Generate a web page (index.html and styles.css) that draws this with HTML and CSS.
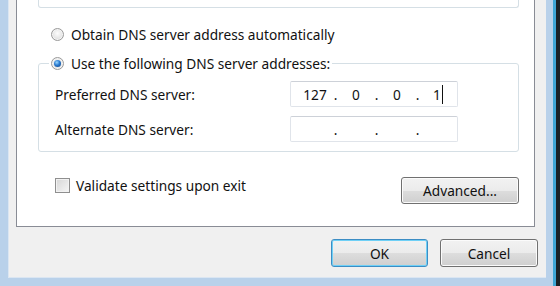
FILE: index.html
```html
<!DOCTYPE html>
<html lang="en">
<head>
    <meta charset="UTF-8">
    <title>Internet Protocol Version 4 (TCP/IPv4) Properties</title>
    <link rel="stylesheet" href="styles.css">
</head>
<body>

    <div class="window">
        <div class="client">
            <div class="tab-page">
                <div class="group-end"></div>

                <label class="option">
                    <span class="radio"></span>
                    Obtain DNS server address automatically
                </label>

                <fieldset class="group">
                    <legend class="option">
                        <span class="radio checked"></span>
                        Use the following DNS server addresses:
                    </legend>
                    <div class="field-row">
                        <span>Preferred DNS server:</span>
                        <div class="ip">
                            <span class="octet">127</span><span class="dot">.</span>
                            <span class="octet">0</span><span class="dot">.</span>
                            <span class="octet">0</span><span class="dot">.</span>
                            <span class="octet"><span class="caret-after">1</span></span>
                        </div>
                    </div>
                    <div class="field-row">
                        <span>Alternate DNS server:</span>
                        <div class="ip">
                            <span class="octet"></span><span class="dot">.</span>
                            <span class="octet"></span><span class="dot">.</span>
                            <span class="octet"></span><span class="dot">.</span>
                            <span class="octet"></span>
                        </div>
                    </div>
                </fieldset>

                <div class="bottom-row">
                    <label class="check">
                        <span class="box"></span>
                        Validate settings upon exit
                    </label>
                    <button class="btn advanced">Advanced...</button>
                </div>
            </div>

            <div class="actions">
                <button class="btn default">OK</button>
                <button class="btn">Cancel</button>
            </div>
        </div>
    </div>

</body>
</html>
```

FILE: styles.css
```css
body {
    margin: 0;
    background: #1b2127;
    font-family: "Segoe UI", "Noto Sans", sans-serif;
    font-size: 13.7px;
    color: #111;
}
.window {
    width: 556px;
    height: 286px;
    box-sizing: border-box;
    background: #b9d1ea;
    padding: 0 7px 8px 8px;
    border-right: 3px solid #3fa6d6;
}
.client {
    height: 278px;
    box-sizing: border-box;
    background: #f0f0f0;
    border-left: 1px solid #dbe6f2;
    border-bottom: 1px solid #dbe6f2;
    padding: 0 8px 0 7px;
}
.tab-page {
    width: 519px;
    height: 227px;
    box-sizing: border-box;
    background: white;
    border: 1px solid #898c95;
    border-top: none;
    display: flex;
    flex-direction: column;
}
.group-end {
    height: 7px;
    margin: 0 15px 0 21px;
    border: 1px solid #d5dfe5;
    border-top: none;
    border-radius: 0 0 3px 3px;
}
.option {
    display: flex;
    align-items: center;
    gap: 7px;
    height: 18px;
}
.tab-page > .option {
    margin: 17px 0 0 34px;
}
.radio {
    width: 11px;
    height: 11px;
    border-radius: 50%;
    border: 1px solid #9a9a9a;
    background: radial-gradient(circle at 50% 40%, #fdfdfd 0%, #e6e6e6 55%, #cfcfcf 100%);
    box-shadow: inset 0 0 0 1px #f4f4f4;
    position: relative;
}
.radio.checked::after {
    content: "";
    position: absolute;
    left: 2px;
    top: 2px;
    width: 7px;
    height: 7px;
    border-radius: 50%;
    background: radial-gradient(circle at 40% 35%, #9ad8ff 0%, #2a7ad0 45%, #0b3e7e 100%);
}
.group {
    margin: 11px 15px 0 21px;
    padding: 9px 0 9px 16px;
    border: 1px solid #d5dfe5;
    border-radius: 3px;
}
.group legend {
    padding: 0 2px;
    margin-left: -6px;
}
.field-row {
    display: grid;
    grid-template-columns: 235px 168px;
    align-items: center;
    margin-top: 9px;
}
.field-row:first-of-type {
    margin-top: 0;
}
.ip {
    height: 26px;
    box-sizing: border-box;
    display: flex;
    align-items: center;
    padding-left: 6px;
    background: white;
    border: 1px solid #e0e4ea;
    border-top-color: #cdd1d8;
    border-radius: 2px;
}
.octet {
    width: 36px;
    text-align: center;
}
.dot {
    width: 5px;
    text-align: center;
}
.caret-after {
    border-right: 1px solid #111;
    padding-right: 1px;
}
.bottom-row {
    display: flex;
    justify-content: space-between;
    align-items: flex-start;
    margin: 25px 15px 0 38px;
}
.check {
    display: flex;
    align-items: center;
    gap: 6px;
    height: 16px;
}
.box {
    width: 13px;
    height: 13px;
    border: 1px solid #8f8f8f;
    background: linear-gradient(135deg, #d6d6d6, #f6f6f6);
    box-shadow: inset 0 0 0 1px #f2f2f2;
}
.btn {
    font: inherit;
    color: #111;
    height: 28px;
    border: 1px solid #707070;
    border-radius: 3px;
    background: linear-gradient(#f2f2f2 0%, #ebebeb 50%, #dddddd 51%, #cfcfcf 100%);
    box-shadow: inset 0 0 0 1px #fbfbfb;
    padding: 0;
}
.advanced {
    width: 118px;
    height: 27px;
}
.actions {
    display: flex;
    justify-content: flex-end;
    gap: 12px;
    margin-top: 12px;
}
.actions .btn {
    width: 98px;
}
.btn.default {
    width: 97px;
    border-color: #3c8dc4;
    box-shadow: inset 0 0 0 1px #6fd0f6;
}
```
